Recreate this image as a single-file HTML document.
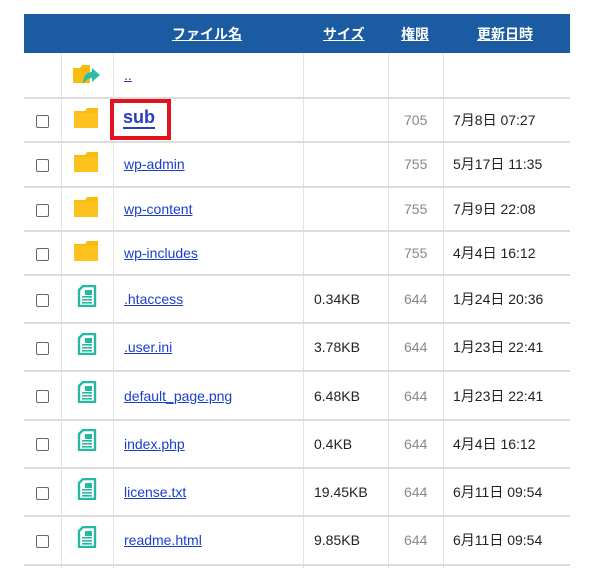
<!DOCTYPE html>
<html><head><meta charset="utf-8"><style>
body{margin:0;width:600px;height:568px;background:#fff;position:relative;overflow:hidden;font-family:"Liberation Sans","Noto Sans CJK JP",sans-serif;font-size:14px;color:#222}
span,a{line-height:16px;display:block}
.hd{position:absolute;left:24px;top:14px;width:546px;height:39px;background:#1b5ba1}
.hd a{position:absolute;top:12px;color:#fff;font-weight:bold;text-decoration:underline;font-size:14px}
.vl{position:absolute;width:1px;background:#e4e4e4;top:53px;height:515px}
.hl{position:absolute;left:24px;width:546px;height:2px;background:#dcdcdc}
.cb{position:absolute;left:36px;width:11px;height:11px;border:1px solid #666;border-radius:2px;background:#fff}
.n{position:absolute;left:124px;color:#1a3fcc;text-decoration:underline}
.s{position:absolute;left:314px}
.p{position:absolute;left:404px;color:#888}
.d{position:absolute;left:453px}
</style></head><body>
<div class="hd">
<a style="left:148px">ファイル名</a>
<a style="left:299px">サイズ</a>
<a style="left:377px">権限</a>
<a style="left:453px">更新日時</a>
</div>
<div class="vl" style="left:61px"></div>
<div class="vl" style="left:113px"></div>
<div class="vl" style="left:303px"></div>
<div class="vl" style="left:388px"></div>
<div class="vl" style="left:443px"></div>
<div class="hl" style="top:97px"></div>
<div class="hl" style="top:141px"></div>
<div class="hl" style="top:186px"></div>
<div class="hl" style="top:230px"></div>
<div class="hl" style="top:274px"></div>
<div class="hl" style="top:322px"></div>
<div class="hl" style="top:370px"></div>
<div class="hl" style="top:419px"></div>
<div class="hl" style="top:467px"></div>
<div class="hl" style="top:515px"></div>
<div class="hl" style="top:564px"></div>

<svg style="position:absolute;left:72px;top:62px" width="30" height="24" viewBox="0 0 30 24">
<path d="M1 6h7l2-3h8v18H1z" fill="#fbbc11"/>
<path d="M11 22c0-8 3-12 9-12v-4l8 7-8 7v-4c-3 0-6 2-9 6z" fill="#2bbfaa"/>
</svg>
<a class="n" style="top:67px">..</a>

<div class="cb" style="top:115px"></div>
<svg style="position:absolute;left:74px;top:108px" width="24" height="20" viewBox="0 0 24 20"><path d="M0 3h11l2-3h11v20H0z" fill="#fbbc11"/><path d="M0 5h24v15H0z" fill="#fdc21d"/></svg>
<div style="position:absolute;left:110px;top:99px;width:53px;height:33px;border:4px solid #e0141e"></div>
<a class="n" style="top:107px;left:123px;font-weight:bold;font-size:18px;color:#2a3fb8;text-decoration:none;border-bottom:2px solid #2a3fb8;line-height:20px">sub</a>
<span class="p" style="top:112px">705</span><span class="d" style="top:112px">7月8日 07:27</span>

<div class="cb" style="top:159px"></div>
<svg style="position:absolute;left:74px;top:152px" width="24" height="20" viewBox="0 0 24 20"><path d="M0 3h11l2-3h11v20H0z" fill="#fbbc11"/><path d="M0 5h24v15H0z" fill="#fdc21d"/></svg>
<a class="n" style="top:156px">wp-admin</a><span class="p" style="top:156px">755</span><span class="d" style="top:156px">5月17日 11:35</span>

<div class="cb" style="top:204px"></div>
<svg style="position:absolute;left:74px;top:197px" width="24" height="20" viewBox="0 0 24 20"><path d="M0 3h11l2-3h11v20H0z" fill="#fbbc11"/><path d="M0 5h24v15H0z" fill="#fdc21d"/></svg>
<a class="n" style="top:201px">wp-content</a><span class="p" style="top:201px">755</span><span class="d" style="top:201px">7月9日 22:08</span>

<div class="cb" style="top:248px"></div>
<svg style="position:absolute;left:74px;top:241px" width="24" height="20" viewBox="0 0 24 20"><path d="M0 3h11l2-3h11v20H0z" fill="#fbbc11"/><path d="M0 5h24v15H0z" fill="#fdc21d"/></svg>
<a class="n" style="top:245px">wp-includes</a><span class="p" style="top:245px">755</span><span class="d" style="top:245px">4月4日 16:12</span>

<svg width="0" height="0" style="position:absolute"><defs><symbol id="doc" viewBox="0 0 20 22"><path d="M6 1h12v20H2V5z" fill="none" stroke="#26b8a4" stroke-width="2.4" stroke-linejoin="round"/><rect x="8" y="5" width="7" height="5" fill="#26b8a4"/><rect x="5" y="11" width="10" height="1.6" fill="#26b8a4"/><rect x="5" y="14" width="10" height="1.6" fill="#26b8a4"/><rect x="5" y="17" width="10" height="1.6" fill="#26b8a4"/></symbol></defs></svg>

<div class="cb" style="top:294px"></div><svg style="position:absolute;left:77px;top:285px" width="20" height="22"><use href="#doc"/></svg>
<a class="n" style="top:291px">.htaccess</a><span class="s" style="top:291px">0.34KB</span><span class="p" style="top:291px">644</span><span class="d" style="top:291px">1月24日 20:36</span>

<div class="cb" style="top:342px"></div><svg style="position:absolute;left:77px;top:333px" width="20" height="22"><use href="#doc"/></svg>
<a class="n" style="top:339px">.user.ini</a><span class="s" style="top:339px">3.78KB</span><span class="p" style="top:339px">644</span><span class="d" style="top:339px">1月23日 22:41</span>

<div class="cb" style="top:390px"></div><svg style="position:absolute;left:77px;top:381px" width="20" height="22"><use href="#doc"/></svg>
<a class="n" style="top:388px">default_page.png</a><span class="s" style="top:388px">6.48KB</span><span class="p" style="top:388px">644</span><span class="d" style="top:388px">1月23日 22:41</span>

<div class="cb" style="top:438px"></div><svg style="position:absolute;left:77px;top:429px" width="20" height="22"><use href="#doc"/></svg>
<a class="n" style="top:436px">index.php</a><span class="s" style="top:436px">0.4KB</span><span class="p" style="top:436px">644</span><span class="d" style="top:436px">4月4日 16:12</span>

<div class="cb" style="top:487px"></div><svg style="position:absolute;left:77px;top:478px" width="20" height="22"><use href="#doc"/></svg>
<a class="n" style="top:484px">license.txt</a><span class="s" style="top:484px">19.45KB</span><span class="p" style="top:484px">644</span><span class="d" style="top:484px">6月11日 09:54</span>

<div class="cb" style="top:535px"></div><svg style="position:absolute;left:77px;top:526px" width="20" height="22"><use href="#doc"/></svg>
<a class="n" style="top:532px">readme.html</a><span class="s" style="top:532px">9.85KB</span><span class="p" style="top:532px">644</span><span class="d" style="top:532px">6月11日 09:54</span>
</body></html>
